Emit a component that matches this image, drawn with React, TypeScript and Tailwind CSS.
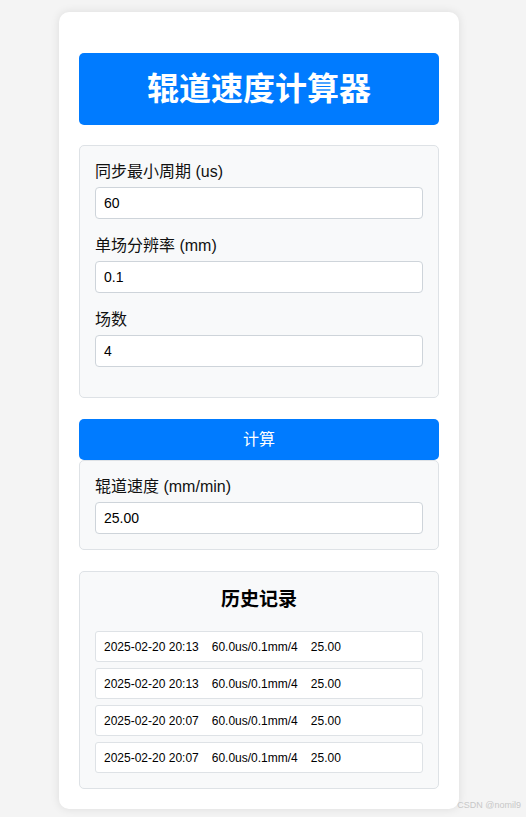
import React from "react";

const font = { fontFamily: '"Liberation Sans", Arial, "Noto Sans CJK SC", sans-serif' };

const history = [
  ["2025-02-20 20:13", "60.0us/0.1mm/4", "25.00"],
  ["2025-02-20 20:13", "60.0us/0.1mm/4", "25.00"],
  ["2025-02-20 20:07", "60.0us/0.1mm/4", "25.00"],
  ["2025-02-20 20:07", "60.0us/0.1mm/4", "25.00"],
];

function Field({ label, value, last }: { label: string; value: string; last?: boolean }) {
  return (
    <div className={last ? "" : "mb-[16px]"}>
      <div className="h-[22px] text-[16px] leading-[22px] text-[#111]">{label}</div>
      <div className="mt-[4px] h-[32px] rounded-[4px] border border-[#ced4da] bg-white px-[8px] text-[14px] leading-[30px] text-black">
        {value}
      </div>
    </div>
  );
}

export default function App() {
  return (
    <div className="relative min-h-[817px] w-[526px] bg-[#f4f4f4] pt-[12px]" style={font}>
      <div className="ml-[59px] w-[400px] rounded-[10px] bg-white px-[20px] pb-[20px] pt-[41px] shadow-[0_0_10px_rgba(0,0,0,0.1)]">
        <div className="flex h-[72px] items-center justify-center rounded-[5px] bg-[#007bff] text-[32px] font-bold text-white">
          辊道速度计算器
        </div>

        <div className="mt-[20px] rounded-[5px] border border-[#dee2e6] bg-[#f8f9fa] px-[15px] pb-[14px] pt-[15px]">
          <Field label="同步最小周期 (us)" value="60" />
          <Field label="单场分辨率 (mm)" value="0.1" />
          <Field label="场数" value="4" />
        </div>

        <div className="mt-[21px] flex h-[41px] items-center justify-center rounded-[5px] bg-[#007bff] text-[16px] text-white">
          计算
        </div>
        <div className="rounded-[5px] border border-[#dee2e6] bg-[#f8f9fa] px-[15px] pb-[15px] pt-[15px]">
          <Field label="辊道速度 (mm/min)" value="25.00" last />
        </div>

        <div className="mt-[21px] rounded-[5px] border border-[#dee2e6] bg-[#f8f9fa] px-[15px] pb-[15px] pt-[16px]">
          <div className="h-[24px] text-center text-[19px] font-bold leading-[24px] text-black">历史记录</div>
          <div className="mt-[19px] flex flex-col gap-[6px]">
            {history.map((h, i) => (
              <div
                key={i}
                className="flex h-[31px] items-center gap-[13px] rounded-[3px] border border-[#dee2e6] bg-white px-[8px] text-[12px] text-black"
              >
                <span>{h[0]}</span>
                <span>{h[1]}</span>
                <span>{h[2]}</span>
              </div>
            ))}
          </div>
        </div>
      </div>
      <div className="absolute right-[5px] top-[799px] text-[9px] text-[#c8c8c8]">CSDN @nomil9</div>
    </div>
  );
}
